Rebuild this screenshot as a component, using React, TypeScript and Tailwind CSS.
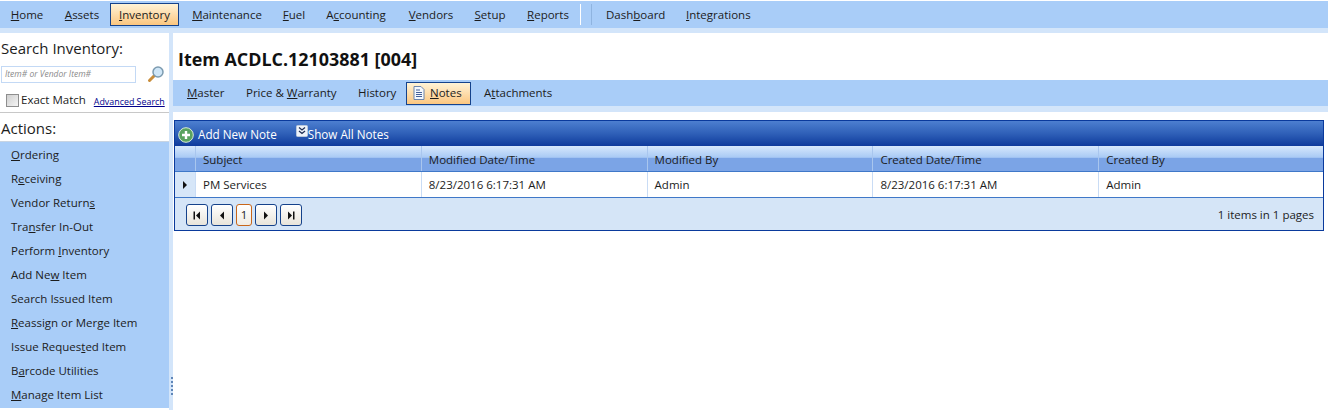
import React from "react";

const nav: [string, string, string, string][] = [
  ["", "H", "ome", "w-[48px]"], ["", "A", "ssets", "ml-[3px] w-[56px]"], ["", "I", "nventory", "w-[69px]"], ["", "M", "aintenance", "w-[96px]"], ["", "F", "uel", "w-[38px]"],
  ["A", "c", "counting", "w-[86px]"], ["", "V", "endors", "w-[64px]"], ["", "S", "etup", "w-[54px]"], ["", "R", "eports", "w-[62px]"],
];
const actions: [string, string, string][] = [
  ["", "O", "rdering"], ["R", "e", "ceiving"], ["Vendor Return", "s", ""], ["Tra", "n", "sfer In-Out"],
  ["Perform ", "I", "nventory"], ["Add Ne", "w", " Item"], ["Search Issued Item", "", ""],
  ["", "R", "eassign or Merge Item"], ["Issue Reques", "t", "ed Item"], ["B", "a", "rcode Utilities"], ["", "M", "anage Item List"],
];
const cols = ["Subject", "Modified Date/Time", "Modified By", "Created Date/Time", "Created By"];
const vals = ["PM Services", "8/23/2016 6:17:31 AM", "Admin", "8/23/2016 6:17:31 AM", "Admin"];

function L({ t }: { t: [string, string, string] | [string, string, string, string] }) {
  return <>{t[0]}{t[1] ? <u>{t[1]}</u> : null}{t[2]}</>;
}

function PagerBtn({ kind }: { kind: "first" | "prev" | "next" | "last" }) {
  return (
    <div className="flex h-[22px] w-[22px] items-center justify-center rounded-[3px] border border-[#15428b] bg-gradient-to-b from-white to-[#e8e4da]">
      <svg width="10" height="9" viewBox="0 0 10 9" fill="#111">
        {kind === "first" && <><rect x="1.5" y="0.5" width="1.5" height="8" /><path d="M8 0.5V8.5L4 4.5Z" /></>}
        {kind === "prev" && <path d="M7 0.5V8.5L3 4.5Z" />}
        {kind === "next" && <path d="M3 0.5V8.5L7 4.5Z" />}
        {kind === "last" && <><path d="M2 0.5V8.5L6 4.5Z" /><rect x="7" y="0.5" width="1.5" height="8" /></>}
      </svg>
    </div>
  );
}

export default function App() {
  return (
    <div className="flex h-[410px] w-[1328px] flex-col overflow-hidden bg-white font-['Open_Sans','Noto_Sans',sans-serif] text-[11.5px] text-[#1c1c1c]">
      <div className="h-px bg-white" />
      <div className="flex h-[27px] items-center bg-[#a9cdf8] pl-[3px]">
        {nav.map((n, i) => {
          const active = n[2] === "nventory";
          return (
            <div key={i} className={`flex h-[23px] items-center justify-center ${n[3]} ${active ? "border border-[#15428b] bg-gradient-to-b from-[#fff3d6] to-[#fbc67f]" : ""}`}>
              <L t={n} />
            </div>
          );
        })}
        <div className="ml-[1px] h-[21px] w-px bg-white" />
        <div className="ml-[10px] h-[21px] w-px bg-[#8fb4e0]" />
        <div className="ml-[14px] w-[80px]">Dash<u>b</u>oard</div>
        <div><u>I</u>ntegrations</div>
      </div>
      <div className="h-[5px] bg-[#d3e5fa]" />

      <div className="flex min-h-0 flex-1">
        <div className="flex w-[169px] shrink-0 flex-col">
          <div className="ml-[1px] mt-[5px] text-[15px] leading-[20px]">Search Inventory:</div>
          <div className="mt-[7px] flex items-center">
            <div className="ml-px flex h-[17px] w-[135px] items-center border border-[#c3d9f5] pl-[3px] text-[8.5px] italic text-[#8a8a8a]">Item# or Vendor Item#</div>
            <svg className="ml-[11px]" width="18" height="18" viewBox="0 0 18 18">
              <path d="M8 10L2.5 15.5" stroke="#c98d3a" strokeWidth="3" strokeLinecap="round" />
              <circle cx="11" cy="7" r="5" fill="#cfe6f7" stroke="#7c9bb0" strokeWidth="1.5" />
            </svg>
          </div>
          <div className="mt-[7px] flex h-[20px] items-center">
            <div className="ml-[6px] h-[13px] w-[13px] border border-[#8e8e8e] bg-gradient-to-br from-[#cfcfcf] to-[#f5f5f5]" />
            <span className="ml-[2px]">Exact Match</span>
            <span className="ml-[8px] pt-[3px] text-[8.9px] text-[#00008b] underline">Advanced Search</span>
          </div>
          <div className="mt-[2px] h-px bg-[#c8c8c8]" />
          <div className="flex h-[28px] items-center pl-px pt-[3px] text-[15px]">Actions:</div>
          <div className="mb-[2px] flex flex-1 flex-col border-t border-[#c8d4e2] bg-[#a9cdf8] pl-[11px] pt-[1px]">
            {actions.map((a, i) => (
              <div key={i} className="flex h-[24px] items-center"><span><L t={a} /></span></div>
            ))}
          </div>
        </div>

        <div className="relative w-[4px] shrink-0 bg-[#d3e5fa]">
          <div className="absolute left-[2px] top-[344px] h-[18px] w-[2px] border-l-2 border-dotted border-[#5f86b8]" />
        </div>

        <div className="flex min-w-0 flex-1 flex-col">
          <div className="ml-[5px] mt-[13px] h-[26px] text-[17.9px] font-bold leading-[26px] text-[#111]">Item ACDLC.12103881 [004]</div>
          <div className="mt-[8px] flex h-[26px] items-center bg-[#a9cdf8] pl-[14px]">
            <span className="w-[59px]"><u>M</u>aster</span>
            <span className="w-[112px]">Price &amp; <u>W</u>arranty</span>
            <span className="w-[48px]">History</span>
            <div className="flex h-[23px] w-[65px] items-center gap-[5px] border border-[#15428b] bg-gradient-to-b from-[#fff3d6] to-[#fbc67f] pl-[6px]">
              <svg width="12" height="14" viewBox="0 0 12 14">
                <path d="M1 .5H8L11 3.5V13.5H1Z" fill="#f4f8fd" stroke="#6d86ad" />
                <path d="M3 4H7M3 6.5H9M3 8.5H9M3 10.5H9" stroke="#44609a" />
              </svg>
              <span><u>N</u>otes</span>
            </div>
            <span className="ml-[13px]">A<u>t</u>tachments</span>
          </div>
          <div className="h-[6px] bg-[#d3e5fa]" />

          <div className="ml-px mr-[4px] mt-[8px] flex flex-col border border-[#0a3a9c]">
            <div className="flex h-[25px] items-center bg-gradient-to-b from-[#4d7fd0] via-[#2f60b8] to-[#0f3a9c] pl-[3px] pt-[2px] text-[11.7px] text-white">
              <svg width="16" height="16" viewBox="0 0 16 16">
                <circle cx="8" cy="8" r="7.3" fill="#5aa35f" stroke="#d9ecd9" />
                <path d="M8 4V12M4 8H12" stroke="#fff" strokeWidth="2.4" />
              </svg>
              <span className="ml-[4px]">Add New Note</span>
              <div className="ml-[19px] flex items-center">
                <svg className="-mt-[6px]" width="12" height="12" viewBox="0 0 12 12">
                  <rect x=".5" y=".5" width="11" height="11" rx="1" fill="#eef3fa" stroke="#b9c8dc" />
                  <path d="M3 2.5L6 5L9 2.5M3 6L6 8.5L9 6" fill="none" stroke="#1f2f55" strokeWidth="1.3" />
                </svg>
                <span>Show All Notes</span>
              </div>
            </div>
            <div className="flex h-[26px] border-b border-[#3f78c8] bg-[linear-gradient(to_bottom,#d7e8fc_0%,#a9caf5_45%,#7ba4e6_50%,#7ba4e6_100%)]">
              <div className="w-[21px] border-r border-[#a9c6ee]" />
              {cols.map((c, i) => (
                <div key={c} className={`flex items-center pl-[7px] pt-[2px] ${i < 4 ? "w-[225.8px] border-r border-[#a9c6ee]" : "flex-1"}`}>{c}</div>
              ))}
            </div>
            <div className="flex h-[26px] border-b border-[#3f78c8] bg-white">
              <div className="flex w-[21px] items-center justify-center border-r border-[#c9dcf5] bg-[#d6e6f8]">
                <svg width="6" height="8" viewBox="0 0 6 8" fill="#111"><path d="M1 0L5 4L1 8Z" /></svg>
              </div>
              {vals.map((c, i) => (
                <div key={i} className={`flex items-center pl-[7px] pt-px ${i < 4 ? "w-[225.8px] border-r border-[#c9dcf5]" : "flex-1"}`}>{c}</div>
              ))}
            </div>
            <div className="flex h-[32px] items-center bg-[#d5e5f7] pl-[11px] pr-[9px] pt-[2px]">
              <PagerBtn kind="first" />
              <div className="ml-[3px]"><PagerBtn kind="prev" /></div>
              <div className="ml-[3px] flex h-[22px] w-[16px] items-center justify-center rounded-[3px] border border-[#c8661a] bg-gradient-to-b from-white to-[#f0ece4]">1</div>
              <div className="ml-[3px]"><PagerBtn kind="next" /></div>
              <div className="ml-[3px]"><PagerBtn kind="last" /></div>
              <div className="ml-auto">1 items in 1 pages</div>
            </div>
          </div>
        </div>
      </div>
    </div>
  );
}
